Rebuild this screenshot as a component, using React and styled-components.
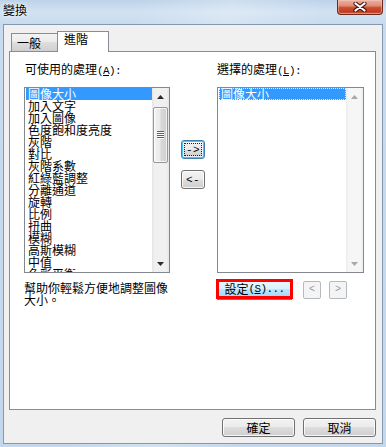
import React from 'react';
import styled, { createGlobalStyle } from 'styled-components';

const FONT = `"Noto Sans CJK TC", "Noto Sans", sans-serif`;
const MONO = `"Liberation Mono", "DejaVu Sans Mono", monospace`;

const Global = createGlobalStyle`
  html, body { margin: 0; padding: 0; width: 386px; height: 447px; overflow: hidden; }
  body { font-family: ${FONT}; font-size: 12px; color: #000; }
  * { box-sizing: border-box; }
`;

const Window = styled.div`
  width: 386px;
  height: 447px;
  display: flex;
  flex-direction: column;
  background:
    linear-gradient(100deg, rgba(255,255,255,0) 30%, rgba(255,255,255,0.25) 50%, rgba(255,255,255,0) 70%),
    linear-gradient(180deg, #bdd3ea 0px, #d2e2f2 12px, #c8dbee 24px, #c3d8ed 100%);
`;

const TitleBar = styled.div`
  height: 24px;
  flex-shrink: 0;
  display: flex;
  justify-content: space-between;
  align-items: flex-start;
  padding: 0 3px 0 3px;
`;

const Title = styled.div`
  margin-top: 4px;
  font-size: 12px;
  line-height: 12px;
  text-shadow: 0 0 4px #fff, 0 0 2px #fff;
`;

const CloseButton = styled.div`
  width: 46px;
  height: 15px;
  border: 1px solid #6e2b1f;
  border-top: none;
  border-radius: 0 0 4px 4px;
  background: linear-gradient(180deg, #eab2a3 0%, #df8e79 40%, #cd4c30 55%, #c13d23 85%, #d2664b 100%);
  box-shadow: inset 0 0 0 1px rgba(255, 205, 190, 0.45);
  display: flex;
  align-items: flex-start;
  justify-content: center;
  padding-top: 2px;
`;

const Client = styled.div`
  flex: 1;
  margin: 0 3px 3px 3px;
  border: 1px solid #8598ad;
  background: #f0f0f0;
  display: flex;
  flex-direction: column;
  padding: 6px 6px 0 5px;
`;

const TabRow = styled.div`
  height: 20px;
  display: flex;
  align-items: flex-end;
  padding-left: 2px;
`;

const Tab = styled.div`
  position: relative;
  border: 1px solid #898c95;
  border-bottom: none;
  font-size: 12px;
  line-height: 12px;
  ${p => p.$active ? `
    width: 52px;
    height: 21px;
    margin-left: -1px;
    margin-bottom: -1px;
    z-index: 1;
    background: #fff;
    padding: 1px 0 0 6px;
  ` : `
    width: 47px;
    height: 18px;
    background: linear-gradient(180deg, #f3f3f3 0%, #ebebeb 50%, #dedede 50%, #cfcfcf 100%);
    padding: 3px 0 0 5px;
  `}
`;

const Panel = styled.div`
  height: 359px;
  background: #fff;
  border: 1px solid #898c95;
  display: grid;
  grid-template-columns: 146px 47px 147px;
  align-content: start;
  padding: 11px 0 0 14px;
`;

const Label = styled.div`
  font-size: 12px;
  line-height: 12px;
  white-space: nowrap;
  padding-left: ${p => p.$indent || 0}px;
`;

const Half = styled.span`
  font-family: ${MONO};
  font-size: 11px;
  letter-spacing: -0.6px;
`;

const Key = styled.span`
  text-decoration: underline;
  text-underline-offset: 1px;
`;

const ListBox = styled.div`
  margin-top: 10px;
  height: 186px;
  border: 1px solid #828790;
  background: #fff;
  display: flex;
  overflow: hidden;
`;

const Items = styled.div`
  flex: 1;
  padding-left: 1px;
  overflow: hidden;
`;

const Item = styled.div`
  height: 12px;
  line-height: 12px;
  font-size: 12px;
  padding-left: 2px;
  white-space: nowrap;
  ${p => p.$selected && `background: #3399ff; color: #fff;`}
  ${p => p.$focus && `outline: 1px dotted rgba(255,255,255,0.85); outline-offset: -1px;`}
`;

const ScrollBar = styled.div`
  width: 17px;
  flex-shrink: 0;
  display: flex;
  flex-direction: column;
  align-items: center;
  background: ${p => p.$disabled
    ? 'linear-gradient(90deg, #ececec 0%, #f6f6f6 15%, #f6f6f6 85%, #ececec 100%)'
    : 'linear-gradient(90deg, #e4e4e4 0%, #f0f0f0 15%, #f0f0f0 85%, #e4e4e4 100%)'};
`;

const ArrowBtn = styled.div`
  width: 17px;
  height: 17px;
  flex-shrink: 0;
  display: flex;
  align-items: center;
  justify-content: center;
`;

const Spacer = styled.div`
  flex: 1;
`;

const Thumb = styled.div`
  width: 15px;
  height: 56px;
  margin-top: 2px;
  border: 1px solid #979797;
  border-radius: 2px;
  background: linear-gradient(90deg, #f4f4f4 0%, #e9e9e9 45%, #d8d8d8 55%, #d0d0d0 100%);
  box-shadow: inset 0 0 0 1px rgba(255,255,255,0.7);
  display: flex;
  flex-direction: column;
  align-items: center;
  justify-content: center;
`;

const Grip = styled.div`
  width: 7px;
  height: 1px;
  background: #5f5f5f;
  box-shadow: 0 1px 0 #fdfdfd;
  margin: 0 0 1px;
`;

const Triangle = ({ up, color }) => (
  <svg width="7" height="4" viewBox="0 0 7 4">
    <path d={up ? 'M3.5 0L7 4H0Z' : 'M0 0H7L3.5 4Z'} fill={color} />
  </svg>
);

const Middle = styled.div`
  margin-top: 10px;
  padding: 53px 0 0 11px;
  display: flex;
  flex-direction: column;
  align-items: flex-start;
  gap: 11px;
`;

const SmallButton = styled.div`
  width: 24px;
  height: 19px;
  border: 1px solid ${p => p.$focused ? '#3c7fb1' : '#707070'};
  border-radius: 3px;
  background: ${p => p.$focused
    ? 'linear-gradient(180deg, #f2f2f2 0%, #ebebeb 50%, #dddddd 50%, #cfcfcf 100%)'
    : 'linear-gradient(180deg, #f2f2f2 0%, #ebebeb 50%, #dddddd 50%, #cfcfcf 100%)'};
  box-shadow: ${p => p.$focused
    ? 'inset 0 0 0 1px #48c6f4, inset 0 0 0 2px rgba(255,255,255,0.6)'
    : 'inset 0 0 0 1px rgba(255,255,255,0.8)'};
  display: flex;
  align-items: center;
  justify-content: center;
  font-family: ${MONO};
  font-size: 11px;
  letter-spacing: 0.4px;
  line-height: 12px;
  position: relative;
  &::after {
    content: '';
    display: ${p => p.$focused ? 'block' : 'none'};
    position: absolute;
    inset: 2px;
    border: 1px dotted #222;
  }
`;

const Description = styled.div`
  margin-top: 6px;
  padding-top: 3px;
  font-size: 12px;
  line-height: 12px;
`;

const SettingsRow = styled.div`
  grid-column: 3;
  margin-top: 6px;
  margin-left: -1px;
  display: flex;
  align-items: flex-start;
`;

const SettingsButton = styled.div`
  width: 77px;
  height: 20px;
  border: 3px solid #ff0000;
  background: linear-gradient(180deg, #eaf6fd 0%, #d9f0fc 50%, #bee6fd 50%, #a7d9f5 100%);
  box-shadow: 0 2px 0 -1px #3c8ad0;
  display: flex;
  align-items: center;
  justify-content: center;
  font-size: 12px;
  line-height: 12px;
  white-space: nowrap;
`;

const NavButton = styled.div`
  width: 18px;
  height: 18px;
  margin: 2px 0 0 ${p => p.$gap}px;
  border: 1px solid #b5b9bd;
  border-radius: 2px;
  background: #f4f4f4;
  color: #9a9a9a;
  display: flex;
  align-items: center;
  justify-content: center;
  font-family: ${MONO};
  font-size: 10px;
  line-height: 10px;
`;

const Footer = styled.div`
  flex: 1;
  display: flex;
  justify-content: flex-end;
  align-items: flex-start;
  gap: 8px;
  padding-top: 8px;
`;

const DialogButton = styled.div`
  width: 73px;
  height: 19px;
  border: 1px solid #707070;
  border-radius: 3px;
  background: linear-gradient(180deg, #f2f2f2 0%, #ebebeb 50%, #dddddd 50%, #cfcfcf 100%);
  box-shadow: inset 0 0 0 1px rgba(255,255,255,0.8);
  display: flex;
  align-items: center;
  justify-content: center;
  font-size: 12px;
  line-height: 12px;
`;

const available = [
  '圖像大小', '加入文字', '加入圖像', '色度飽和度亮度', '灰階', '對比', '灰階系數',
  '紅綠藍調整', '分離通道', '旋轉', '比例', '扭曲', '模糊', '高斯模糊', '中值', '色彩平衡',
];

const List = ({ items, selected, focus, disabledBar }) => (
  <ListBox>
    <Items>
      {items.map((t, i) => (
        <Item key={i} $selected={i === selected} $focus={focus && i === selected}>{t}</Item>
      ))}
    </Items>
    <ScrollBar $disabled={disabledBar}>
      <ArrowBtn><Triangle up color={disabledBar ? '#a8a8a8' : '#2b2b2b'} /></ArrowBtn>
      {!disabledBar && (
        <Thumb>
          <Grip /><Grip /><Grip /><Grip />
        </Thumb>
      )}
      <Spacer />
      <ArrowBtn><Triangle color={disabledBar ? '#a8a8a8' : '#2b2b2b'} /></ArrowBtn>
    </ScrollBar>
  </ListBox>
);

export default function App() {
  return (
    <>
      <Global />
      <Window>
        <TitleBar>
          <Title>變換</Title>
          <CloseButton>
            <svg width="14" height="10" viewBox="0 0 14 10">
              <path d="M2.5 1.5L11.5 8.5M11.5 1.5L2.5 8.5" stroke="#4a1a10" strokeWidth="4.2" strokeLinecap="round" />
              <path d="M2.5 1.5L11.5 8.5M11.5 1.5L2.5 8.5" stroke="#ffffff" strokeWidth="2.2" strokeLinecap="round" />
            </svg>
          </CloseButton>
        </TitleBar>
        <Client>
          <TabRow>
            <Tab>一般</Tab>
            <Tab $active>進階</Tab>
          </TabRow>
          <Panel>
            <Label $indent={1}>可使用的處理<Half>(<Key>A</Key>):</Half></Label>
            <div />
            <Label>選擇的處理<Half>(<Key>L</Key>):</Half></Label>

            <List items={available} selected={0} />
            <Middle>
              <SmallButton $focused>-&gt;</SmallButton>
              <SmallButton>&lt;-</SmallButton>
            </Middle>
            <List items={['圖像大小']} selected={0} focus disabledBar />

            <Description>幫助你輕鬆方便地調整圖像大小。</Description>
            <SettingsRow>
              <SettingsButton>設定<Half>(<Key>S</Key>)...</Half></SettingsButton>
              <NavButton $gap={10}>&lt;</NavButton>
              <NavButton $gap={8}>&gt;</NavButton>
            </SettingsRow>
          </Panel>
          <Footer>
            <DialogButton>確定</DialogButton>
            <DialogButton>取消</DialogButton>
          </Footer>
        </Client>
      </Window>
    </>
  );
}
